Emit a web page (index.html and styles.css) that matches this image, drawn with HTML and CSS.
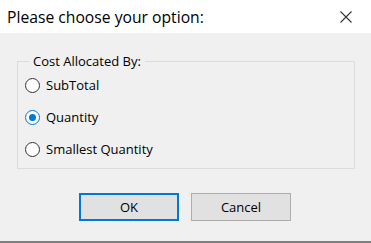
FILE: index.html
```html
<!DOCTYPE html>
<html>
<head>
<meta charset="utf-8">
<link rel="stylesheet" href="styles.css">
</head>
<body>
<div class="dialog">
  <div class="titlebar">
    <span class="title">Please choose your option:</span>
    <svg class="close" width="12" height="12" viewBox="0 0 12 12"><path d="M0.5 0.5 L11.5 11.5 M11.5 0.5 L0.5 11.5" stroke="#333" stroke-width="1.1" fill="none"/></svg>
  </div>
  <div class="content">
    <fieldset class="group">
      <legend class="legend">Cost Allocated By:</legend>
      <div class="option"><span class="radio"></span><span class="label">SubTotal</span></div>
      <div class="option"><span class="radio checked"></span><span class="label">Quantity</span></div>
      <div class="option"><span class="radio"></span><span class="label">Smallest Quantity</span></div>
    </fieldset>
    <div class="buttons">
      <div class="btn default">OK</div>
      <div class="btn">Cancel</div>
    </div>
  </div>
</div>
</body>
</html>
```
FILE: styles.css
```css
html, body {
  margin: 0;
  padding: 0;
}
body {
  width: 371px;
  height: 243px;
  overflow: hidden;
  font-family: "Open Sans", "Noto Sans", sans-serif;
  color: #000;
}
.dialog {
  width: 371px;
  height: 243px;
  display: flex;
  flex-direction: column;
}
.titlebar {
  height: 33px;
  background: #fff;
  display: flex;
  align-items: center;
  justify-content: space-between;
  padding: 0 19px 0 7px;
  box-sizing: border-box;
}
.title {
  font-size: 15.7px;
  color: #000;
}
.close {
  display: block;
  margin-top: 1px;
}
.content {
  flex: 1;
  background: #f0f0f0;
  border-bottom: 2px solid #7f7f7f;
  display: flex;
  flex-direction: column;
  padding-top: 20px;
}
.group {
  margin: 0 16px 0 17px;
  padding: 0 0 0 7px;
  height: 116px;
  box-sizing: border-box;
  border: 1px solid #dcdcdc;
  display: flex;
  flex-direction: column;
}
.legend {
  font-size: 13px;
  color: #000;
  padding: 0 4px;
  margin-left: 4px;
  line-height: 16px;
}
.option {
  display: flex;
  align-items: center;
  height: 32px;
  font-size: 13px;
}
.option:first-of-type {
  margin-top: 0;
}
.radio {
  width: 13px;
  height: 13px;
  border: 1px solid #333;
  border-radius: 50%;
  background: #fff;
  box-sizing: content-box;
  margin-right: 6px;
  position: relative;
  flex: none;
}
.radio.checked {
  border-color: #0078d7;
}
.radio.checked::after {
  content: "";
  position: absolute;
  left: 3px;
  top: 3px;
  width: 7px;
  height: 7px;
  border-radius: 50%;
  background: #0078d7;
}
.buttons {
  display: flex;
  gap: 12px;
  margin-top: 24px;
  padding-left: 79px;
}
.btn {
  width: 100px;
  height: 28px;
  box-sizing: border-box;
  background: #e1e1e1;
  border: 1px solid #adadad;
  font-size: 13px;
  display: flex;
  align-items: center;
  justify-content: center;
}
.btn.default {
  border: 2px solid #0078d7;
}
```
